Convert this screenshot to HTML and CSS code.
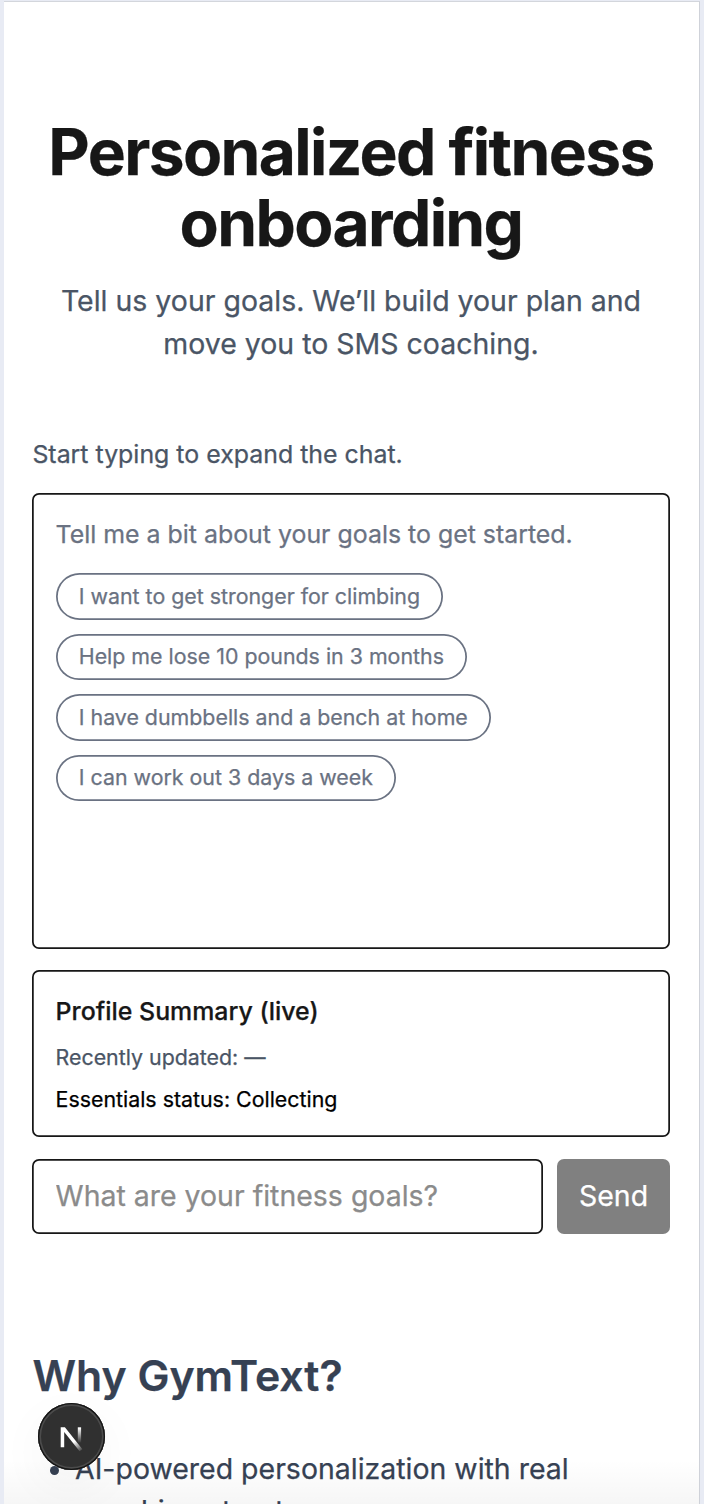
FILE: index.html
```html
<!DOCTYPE html>
<html lang="en">
<head>
<meta charset="utf-8">
<title>GymText</title>
<link rel="stylesheet" href="styles.css">
</head>
<body>
<div class="frame">
  <main class="page">
    <header class="hero">
      <h1 class="title">Personalized fitness onboarding</h1>
      <p class="subtitle">Tell us your goals. We’ll build your plan and move you to SMS coaching.</p>
    </header>
    <section class="chat">
      <p class="hint">Start typing to expand the chat.</p>
      <div class="box messages">
        <p class="prompt">Tell me a bit about your goals to get started.</p>
        <div class="pills">
          <button class="pill">I want to get stronger for climbing</button>
          <button class="pill">Help me lose 10 pounds in 3 months</button>
          <button class="pill">I have dumbbells and a bench at home</button>
          <button class="pill">I can work out 3 days a week</button>
        </div>
      </div>
      <div class="box summary">
        <h3 class="summary-title">Profile Summary (live)</h3>
        <p class="updated">Recently updated: —</p>
        <p class="status">Essentials status: Collecting</p>
      </div>
      <form class="composer">
        <input class="box field" type="text" placeholder="What are your fitness goals?">
        <button class="send" type="button">Send</button>
      </form>
    </section>
    <section class="why">
      <h2 class="why-title">Why GymText?</h2>
      <ul class="reasons">
        <li>AI-powered personalization with real coaching structure</li>
      </ul>
    </section>
  </main>
  <div class="fade"></div>
  <div class="badge">
    <svg class="badge-icon" viewBox="0 0 67 67">
      <defs>
        <linearGradient id="diag" gradientUnits="userSpaceOnUse" x1="37" y1="38" x2="44.5" y2="48.5">
          <stop offset="0" stop-color="#fff"/><stop offset="1" stop-color="#fff" stop-opacity="0"/>
        </linearGradient>
        <linearGradient id="stem" gradientUnits="userSpaceOnUse" x1="0" y1="25" x2="0" y2="40">
          <stop offset="0" stop-color="#fff"/><stop offset="1" stop-color="#fff" stop-opacity="0"/>
        </linearGradient>
      </defs>
      <path d="M22.7 44.3V24.3h4.2L44.4 46.3l-2.8 2L26.2 29v15.3z" fill="url(#diag)"/>
      <path d="M39.8 24.3h3.3v15.5h-3.3z" fill="url(#stem)"/>
    </svg>
  </div>
</div>
</body>
</html>
```

FILE: styles.css
```css
* { box-sizing: border-box; }
body, h1, h2, h3, p, ul { margin: 0; }
body {
  height: 1504px;
  overflow: hidden;
  background: #e8ebf4;
  font-family: Inter, "Liberation Sans", sans-serif;
  font-size: 28.48px;
  line-height: 42.75px;
  color: #171717;
  -webkit-text-stroke: 0.25px currentColor;
}
button, input { font: inherit; border: 0; }
.frame {
  position: relative;
  width: 696px;
  height: 1503px;
  margin: 1px 0 0 4px;
  overflow: hidden;
  background: #fff;
  border-top: 1px solid #d3d6dc;
  border-right: 1px solid #cfd2d9;
}
.page { padding: 114px 29.4px 0 28.4px; }
.hero { text-align: center; }
.title {
  font-size: 64px;
  line-height: 71.2px;
  font-weight: 700;
  letter-spacing: -0.025em;
  margin: 0 -10px;
}
.subtitle { margin-top: 21.4px; color: #4a5565; }
.chat { display: flex; flex-direction: column; gap: 21.4px; margin-top: 71.2px; }
.hint { font-size: 24.9px; line-height: 35.6px; padding-top: 1px; margin-bottom: -1px; color: #4a5565; }
.box {
  border-radius: 7px;
  background: #fff;
  box-shadow: inset 0 0 0 1.75px #171717;
}
.messages { height: 455.5px; padding: 23.2px; }
.prompt { font-size: 24.9px; line-height: 35.6px; color: #6a7282; }
.pills {
  display: flex;
  flex-direction: column;
  align-items: flex-start;
  gap: 14.2px;
  margin-top: 21.2px;
}
.pill {
  padding: 8.4px 23.2px 9.4px;
  border-radius: 24px;
  background: #fff;
  box-shadow: inset 0 0 0 1.75px #6a7282;
  font-size: 21.37px;
  line-height: 28.5px;
  color: #6a7282;
}
.summary { padding: 23.2px; font-size: 21.37px; line-height: 28.5px; }
.summary-title { font-size: 24.9px; line-height: 35.6px; font-weight: 500; }
.updated { margin-top: 14px; color: #4a5565; }
.status { margin: 13.2px 0 0.8px; color: #000; }
.composer { display: flex; gap: 14.2px; height: 74.8px; }
.field { flex: 1; min-width: 0; padding: 0 23.2px; outline: 0; }
.field::placeholder { color: #8b8b8b; opacity: 1; }
.send {
  padding: 0 21.5px;
  border-radius: 7px;
  background: #808080;
  color: #fff;
}
.why { margin-top: 113.5px; color: #364153; }
.why-title { font-size: 42.75px; line-height: 57px; font-weight: 600; }
.reasons { margin-top: 43.5px; padding-left: 42.7px; }
.fade {
  position: absolute;
  left: 0;
  right: 0;
  bottom: 0;
  height: 44px;
  background: linear-gradient(rgba(0, 0, 0, 0), rgba(0, 0, 0, 0.035));
}
.badge {
  position: absolute;
  left: 34px;
  top: 1401px;
  width: 67px;
  height: 67px;
  border-radius: 50%;
  background: #303030;
  box-shadow: inset 0 0 0 1.3px #151515, inset 0 0 0 3px #4b4b4b, 0 16px 50px rgba(0, 0, 0, 0.045);
}
.badge-icon { display: block; width: 67px; height: 67px; }
```
